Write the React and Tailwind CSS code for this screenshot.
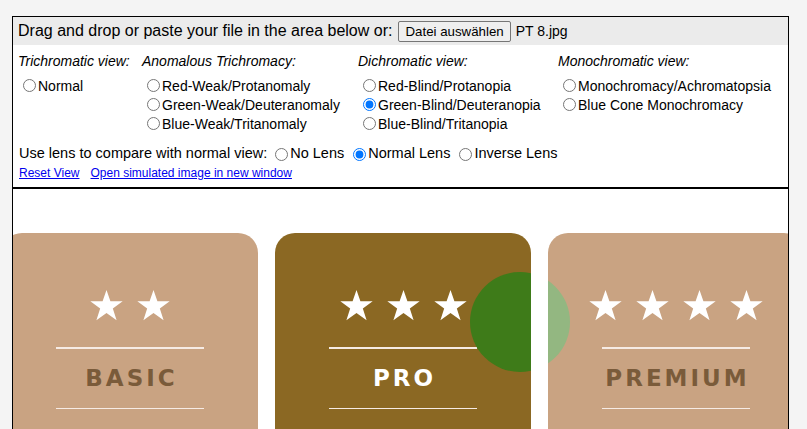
import { useState } from "react";

function Radio({ name, label, checked }) {
  return (
    <label className="flex items-center h-[19px] text-[14px] text-black leading-none">
      <input
        type="radio"
        name={name}
        defaultChecked={checked}
        className="w-[13px] h-[13px] ml-[5px] mr-[2px] my-0 accent-[#0075ff]"
      />
      {label}
    </label>
  );
}

function Star() {
  return (
    <svg width="33" height="31" viewBox="0 0 24 23" className="fill-white">
      <path d="M12 0l2.9 8.3H24l-7.3 5.4 2.8 8.8L12 17.1l-7.5 5.4 2.8-8.8L0 8.3h9.1z" />
    </svg>
  );
}

function Card({ stars, title, bg, text }) {
  return (
    <div className={`w-[256px] h-[240px] shrink-0 rounded-t-[20px] ${bg} flex flex-col items-center pt-[57px]`}>
      <div className="flex gap-[14px]">
        {Array.from({ length: stars }).map((_, i) => (
          <Star key={i} />
        ))}
      </div>
      <div className="w-[148px] h-[1.5px] bg-[#f6ebe4] mt-[26px]" />
      <div
        className={`h-[59px] flex items-center justify-center text-[23px] font-bold tracking-[3px] pl-[3px] pt-[1px] ${text}`}
        style={{ fontFamily: '"DejaVu Sans", sans-serif' }}
      >
        {title}
      </div>
      <div className="w-[148px] h-[1.5px] bg-[#f6ebe4]" />
    </div>
  );
}

export default function App() {
  const [file] = useState("PT 8.jpg");

  return (
    <div
      className="w-[807px] h-[429px] bg-[#f4f4f4] pt-[16px] pl-[12px] overflow-hidden"
      style={{ fontFamily: '"Liberation Sans", Arial, sans-serif' }}
    >
      <div className="w-[777px] h-[500px] border border-black bg-white">
        {/* Header */}
        <div className="h-[28px] bg-[#ebebeb] flex items-center pl-[5px] text-[16px] text-black">
          <span>Drag and drop or paste your file in the area below or:</span>
          <button className="ml-[6px] h-[21px] px-[6px] text-[13.3px] bg-[#efefef] border border-[#767676] rounded-[2px]">
            Datei auswählen
          </button>
          <span className="ml-[5px] text-[14px]">{file}</span>
        </div>

        {/* Options */}
        <div className="pl-[5px] pt-[7px]">
          <div className="flex">
            <div className="w-[124px]">
              <div className="italic text-[14px] h-[19px] flex items-center">Trichromatic view:</div>
              <div className="mt-[5px]">
                <Radio name="sim" label="Normal" />
              </div>
            </div>
            <div className="w-[216px]">
              <div className="italic text-[14px] h-[19px] flex items-center">Anomalous Trichromacy:</div>
              <div className="mt-[5px]">
                <Radio name="sim" label="Red-Weak/Protanomaly" />
                <Radio name="sim" label="Green-Weak/Deuteranomaly" />
                <Radio name="sim" label="Blue-Weak/Tritanomaly" />
              </div>
            </div>
            <div className="w-[200px]">
              <div className="italic text-[14px] h-[19px] flex items-center">Dichromatic view:</div>
              <div className="mt-[5px]">
                <Radio name="sim" label="Red-Blind/Protanopia" />
                <Radio name="sim" label="Green-Blind/Deuteranopia" checked />
                <Radio name="sim" label="Blue-Blind/Tritanopia" />
              </div>
            </div>
            <div>
              <div className="italic text-[14px] h-[19px] flex items-center">Monochromatic view:</div>
              <div className="mt-[5px]">
                <Radio name="sim" label="Monochromacy/Achromatopsia" />
                <Radio name="sim" label="Blue Cone Monochromacy" />
              </div>
            </div>
          </div>

          <div className="flex items-center h-[20px] mt-[11px] text-[14.5px]">
            <span className="mr-[3px] pl-[1px]">Use lens to compare with normal view:</span>
            <label className="flex items-center mr-[4px]">
              <input type="radio" name="lens" className="w-[13px] h-[13px] ml-[5px] mr-[2px] accent-[#0075ff]" />
              No Lens
            </label>
            <label className="flex items-center mr-[4px]">
              <input type="radio" name="lens" defaultChecked className="w-[13px] h-[13px] ml-[5px] mr-[2px] accent-[#0075ff]" />
              Normal Lens
            </label>
            <label className="flex items-center">
              <input type="radio" name="lens" className="w-[13px] h-[13px] ml-[5px] mr-[2px] accent-[#0075ff]" />
              Inverse Lens
            </label>
          </div>

          <div className="flex gap-[11px] text-[12px] h-[18px] items-center pl-[1px]">
            <a href="#" className="text-[#0000ee] underline">Reset View</a>
            <a href="#" className="text-[#0000ee] underline">Open simulated image in new window</a>
          </div>
        </div>

        <div className="h-[2px] bg-black mt-[5px]" />

        {/* Image area */}
        <div className="relative h-[260px] overflow-hidden pt-[44px]">
          <div className="flex gap-[17px] ml-[-11px]">
            <Card stars={2} title="BASIC" bg="bg-[#c9a382]" text="text-[#7a5b3a]" />
            <Card stars={3} title="PRO" bg="bg-[#8b6823]" text="text-white" />
            <Card stars={4} title="PREMIUM" bg="bg-[#c9a382]" text="text-[#7a5b3a]" />
          </div>
          {/* lens */}
          <div className="absolute left-[457px] top-[83px] w-[100px] h-[100px] rounded-full overflow-hidden">
            <div className="flex h-full">
              <div className="w-[61px] h-full bg-[#3e7b19]" />
              <div className="w-[17px] h-full bg-white" />
              <div className="w-[22px] h-full bg-[#93b781]" />
            </div>
          </div>
        </div>
      </div>
    </div>
  );
}
